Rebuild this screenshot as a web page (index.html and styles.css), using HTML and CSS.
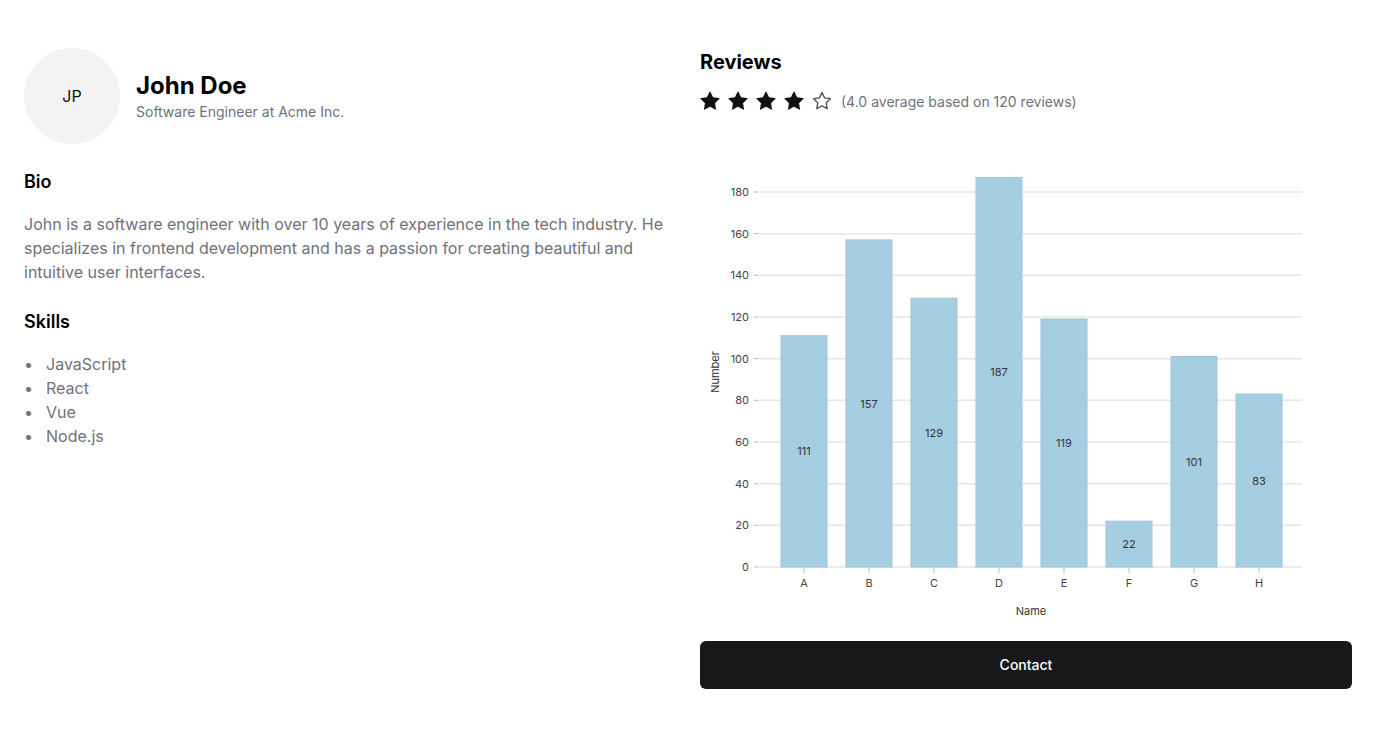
FILE: index.html
```html
<!DOCTYPE html>
<html lang="en">
<head>
<meta charset="utf-8">
<title>Profile</title>
<link rel="stylesheet" href="styles.css">
</head>
<body>
<div class="page">
  <section class="left">
    <div class="header">
      <div class="avatar">JP</div>
      <div class="ident">
        <h1 class="name">John Doe</h1>
        <p class="role">Software Engineer at Acme Inc.</p>
      </div>
    </div>
    <h2 class="h2 bio-title">Bio</h2>
    <p class="bio">John is a software engineer with over 10 years of experience in the tech industry. He specializes in frontend development and has a passion for creating beautiful and intuitive user interfaces.</p>
    <h2 class="h2 skills-title">Skills</h2>
    <ul class="skills">
      <li>JavaScript</li>
      <li>React</li>
      <li>Vue</li>
      <li>Node.js</li>
    </ul>
  </section>
  <section class="right">
    <h2 class="reviews-title">Reviews</h2>
    <div class="rating">
      <div class="stars">
        <svg class="star" viewBox="2 2 20 20"><path d="M12 2l3.09 6.26L22 9.27l-5 4.87 1.18 6.88L12 17.77l-6.18 3.25L7 14.14 2 9.27l6.91-1.01L12 2z" fill="#111"/></svg>
        <svg class="star" viewBox="2 2 20 20"><path d="M12 2l3.09 6.26L22 9.27l-5 4.87 1.18 6.88L12 17.77l-6.18 3.25L7 14.14 2 9.27l6.91-1.01L12 2z" fill="#111"/></svg>
        <svg class="star" viewBox="2 2 20 20"><path d="M12 2l3.09 6.26L22 9.27l-5 4.87 1.18 6.88L12 17.77l-6.18 3.25L7 14.14 2 9.27l6.91-1.01L12 2z" fill="#111"/></svg>
        <svg class="star" viewBox="2 2 20 20"><path d="M12 2l3.09 6.26L22 9.27l-5 4.87 1.18 6.88L12 17.77l-6.18 3.25L7 14.14 2 9.27l6.91-1.01L12 2z" fill="#111"/></svg>
        <svg class="star" viewBox="2 2 20 20"><path d="M12 3.6l2.6 5.3 5.8 0.85-4.2 4.1 1 5.8L12 16.9l-5.2 2.75 1-5.8-4.2-4.1 5.8-0.85L12 3.6z" fill="none" stroke="#555" stroke-width="1.4" stroke-linejoin="round"/></svg>
      </div>
      <span class="rating-text">(4.0 average based on 120 reviews)</span>
    </div>
    <svg class="chart" width="652" height="496" viewBox="0 0 652 496">
      <g class="grid" stroke="#e6e6e6" stroke-width="1.5">
        <line x1="60" x2="602" y1="438" y2="438"/>
        <line x1="60" x2="602" y1="396.33" y2="396.33"/>
        <line x1="60" x2="602" y1="354.67" y2="354.67"/>
        <line x1="60" x2="602" y1="313" y2="313"/>
        <line x1="60" x2="602" y1="271.33" y2="271.33"/>
        <line x1="60" x2="602" y1="229.67" y2="229.67"/>
        <line x1="60" x2="602" y1="188" y2="188"/>
        <line x1="60" x2="602" y1="146.33" y2="146.33"/>
        <line x1="60" x2="602" y1="104.67" y2="104.67"/>
        <line x1="60" x2="602" y1="63" y2="63"/>
      </g>
      <g class="ticks" stroke="#bbb" stroke-width="1">
        <line x1="54" x2="59" y1="438" y2="438"/>
        <line x1="54" x2="59" y1="396.33" y2="396.33"/>
        <line x1="54" x2="59" y1="354.67" y2="354.67"/>
        <line x1="54" x2="59" y1="313" y2="313"/>
        <line x1="54" x2="59" y1="271.33" y2="271.33"/>
        <line x1="54" x2="59" y1="229.67" y2="229.67"/>
        <line x1="54" x2="59" y1="188" y2="188"/>
        <line x1="54" x2="59" y1="146.33" y2="146.33"/>
        <line x1="54" x2="59" y1="104.67" y2="104.67"/>
        <line x1="54" x2="59" y1="63" y2="63"/>
        <line x1="104" x2="104" y1="439" y2="444"/>
        <line x1="169" x2="169" y1="439" y2="444"/>
        <line x1="234" x2="234" y1="439" y2="444"/>
        <line x1="299" x2="299" y1="439" y2="444"/>
        <line x1="364" x2="364" y1="439" y2="444"/>
        <line x1="429" x2="429" y1="439" y2="444"/>
        <line x1="494" x2="494" y1="439" y2="444"/>
        <line x1="559" x2="559" y1="439" y2="444"/>
      </g>
      <g class="ylabels">
        <text x="49" y="438">0</text>
        <text x="49" y="396.33">20</text>
        <text x="49" y="354.67">40</text>
        <text x="49" y="313">60</text>
        <text x="49" y="271.33">80</text>
        <text x="49" y="229.67">100</text>
        <text x="49" y="188">120</text>
        <text x="49" y="146.33">140</text>
        <text x="49" y="104.67">160</text>
        <text x="49" y="63">180</text>
      </g>
      <g class="bars" fill="#a6cee3" stroke="#9cc4da" stroke-width="1">
        <rect x="81" y="206.75" width="46" height="231.25"/>
        <rect x="146" y="110.92" width="46" height="327.08"/>
        <rect x="211" y="169.25" width="46" height="268.75"/>
        <rect x="276" y="48.42" width="46" height="389.58"/>
        <rect x="341" y="190.08" width="46" height="247.92"/>
        <rect x="406" y="392.17" width="46" height="45.83"/>
        <rect x="471" y="227.58" width="46" height="210.42"/>
        <rect x="536" y="265.08" width="46" height="172.92"/>
      </g>
      <g class="values">
        <text x="104" y="322.4">111</text>
        <text x="169" y="274.5">157</text>
        <text x="234" y="303.6">129</text>
        <text x="299" y="243.2">187</text>
        <text x="364" y="314">119</text>
        <text x="429" y="415.1">22</text>
        <text x="494" y="332.8">101</text>
        <text x="559" y="351.5">83</text>
      </g>
      <g class="xlabels">
        <text x="104" y="454">A</text>
        <text x="169" y="454">B</text>
        <text x="234" y="454">C</text>
        <text x="299" y="454">D</text>
        <text x="364" y="454">E</text>
        <text x="429" y="454">F</text>
        <text x="494" y="454">G</text>
        <text x="559" y="454">H</text>
      </g>
      <text class="axis-title" x="331" y="482">Name</text>
      <text class="axis-title" x="15" y="243" transform="rotate(-90 15 243)">Number</text>
    </svg>
    <button class="contact">Contact</button>
  </section>
</div>
</body>
</html>
```

FILE: styles.css
```css
* { box-sizing: border-box; }
html, body { margin: 0; padding: 0; background: #fff; }
body {
  font-family: Inter, "Noto Sans", sans-serif;
  color: #000;
}
.page {
  display: grid;
  grid-template-columns: 652px 652px;
  column-gap: 24px;
  padding: 48px 24px;
}
.header {
  display: flex;
  align-items: center;
  gap: 16px;
}
.avatar {
  width: 96px;
  height: 96px;
  border-radius: 50%;
  background: #f3f3f3;
  display: flex;
  align-items: center;
  justify-content: center;
  font-size: 16px;
  color: #111;
}
.name {
  margin: 0;
  font-size: 24px;
  line-height: 32px;
  font-weight: 700;
}
.role {
  margin: 0;
  font-size: 14px;
  line-height: 20px;
  color: #71717a;
}
.h2 {
  margin: 0;
  font-size: 18px;
  line-height: 28px;
  font-weight: 600;
}
.bio-title { margin-top: 24px; }
.bio {
  margin: 16px 0 0;
  font-size: 16px;
  line-height: 24px;
  color: #71717a;
}
.skills-title { margin-top: 24px; }
.skills {
  margin: 16px 0 0;
  padding: 0;
  list-style: none;
  font-size: 16px;
  line-height: 24px;
  color: #71717a;
}
.skills li {
  display: flex;
}
.skills li::before {
  content: "•";
  width: 22px;
  flex: none;
  color: #71717a;
}
.right {
  display: flex;
  flex-direction: column;
}
.reviews-title {
  margin: 0;
  font-size: 20px;
  line-height: 28px;
  font-weight: 700;
}
.rating {
  margin-top: 13px;
  height: 24px;
  display: flex;
  align-items: center;
  gap: 9px;
}
.stars {
  display: flex;
  gap: 8px;
}
.star {
  width: 20px;
  height: 20px;
  display: block;
}
.rating-text {
  font-size: 14px;
  color: #71717a;
}
.chart {
  display: block;
  margin-top: 16px;
  font-family: Inter, "Noto Sans", sans-serif;
}
.ylabels text {
  font-size: 11px;
  fill: #444;
  text-anchor: end;
  dominant-baseline: central;
}
.xlabels text {
  font-size: 11px;
  fill: #444;
  text-anchor: middle;
  dominant-baseline: central;
}
.values text {
  font-size: 11px;
  fill: #333;
  text-anchor: middle;
  dominant-baseline: central;
}
.axis-title {
  font-size: 11px;
  fill: #333;
  text-anchor: middle;
  dominant-baseline: central;
}
.contact {
  margin-top: 16px;
  height: 48px;
  width: 100%;
  border: none;
  border-radius: 6px;
  background: #18181b;
  color: #fff;
  font-family: Inter, "Noto Sans", sans-serif;
  font-size: 14px;
  font-weight: 500;
  padding: 0 0 2px;
}
```
